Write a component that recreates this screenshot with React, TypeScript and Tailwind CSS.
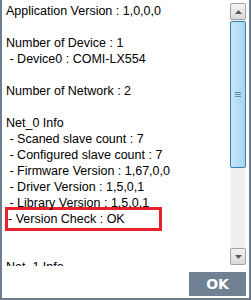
const lines: string[] = [
  'Application Version : 1,0,0,0',
  '',
  'Number of Device : 1',
  ' - Device0 : COMI-LX554',
  '',
  'Number of Network : 2',
  '',
  'Net_0 Info',
  ' - Scaned slave count : 7',
  ' - Configured slave count : 7',
  ' - Firmware Version : 1,67,0,0',
  ' - Driver Version : 1,5,0,1',
  ' - Library Version : 1,5,0,1',
];

function ScrollButton({ down }: { down?: boolean }) {
  return (
    <div className="h-[17px] shrink-0 rounded-[2px] border border-[#a3a3a3] bg-gradient-to-b from-[#f4f4f4] to-[#d9d9d9] flex items-center justify-center">
      <svg width="7" height="4" viewBox="0 0 7 4">
        {down ? (
          <path d="M0 0 H7 L3.5 4 Z" fill="#5a5a5a" />
        ) : (
          <path d="M0 4 H7 L3.5 0 Z" fill="#5a5a5a" />
        )}
      </svg>
    </div>
  );
}

function Scrollbar() {
  return (
    <div className="w-[16px] mt-[3px] h-[262px] flex flex-col bg-[#efefef] shrink-0">
      <ScrollButton />
      <div className="mt-px h-[147px] rounded-[2px] border border-[#3b80b3] bg-gradient-to-r from-[#c9e7f8] to-[#a6d5f2] flex flex-col items-center justify-center gap-[1px]">
        <div className="w-[6px] h-px bg-[#5d8fb4]" />
        <div className="w-[6px] h-px bg-[#5d8fb4]" />
        <div className="w-[6px] h-px bg-[#5d8fb4]" />
      </div>
      <div className="flex-1 border-x border-[#f8f8f8]" />
      <ScrollButton down />
    </div>
  );
}

export default function App() {
  return (
    <div
      className="w-[251px] h-[300px] bg-white border-x-2 border-b-2 border-[#6d7d8e] flex flex-col"
      style={{ fontFamily: '"Liberation Sans", Arial, sans-serif' }}
    >
      <div className="h-[266px] flex">
        <div className="flex-1 overflow-hidden pl-[4px] pt-[3px] text-[12.5px] leading-[16px] text-black">
          {lines.map((l, i) => (
            <div key={i} className="h-[16px] whitespace-pre">
              {l}
            </div>
          ))}
          <div className="-ml-px -my-[4px] w-[157px] border-[3px] border-[#e8212b] py-px whitespace-pre">
            {'- Version Check : OK'}
          </div>
          <div className="h-[16px]" />
          <div className="h-[16px]" />
          <div className="h-[16px] whitespace-pre">Net_1 Info</div>
        </div>
        <Scrollbar />
        <div className="w-[3px]" />
      </div>
      <div className="flex-1 flex justify-end items-end pr-[3px] pb-[2px]">
        <button
          className="w-[57px] h-[24px] bg-[#708193] text-white font-bold text-[14px] leading-none"
          style={{ fontFamily: '"DejaVu Sans", sans-serif' }}
        >
          OK
        </button>
      </div>
    </div>
  );
}
